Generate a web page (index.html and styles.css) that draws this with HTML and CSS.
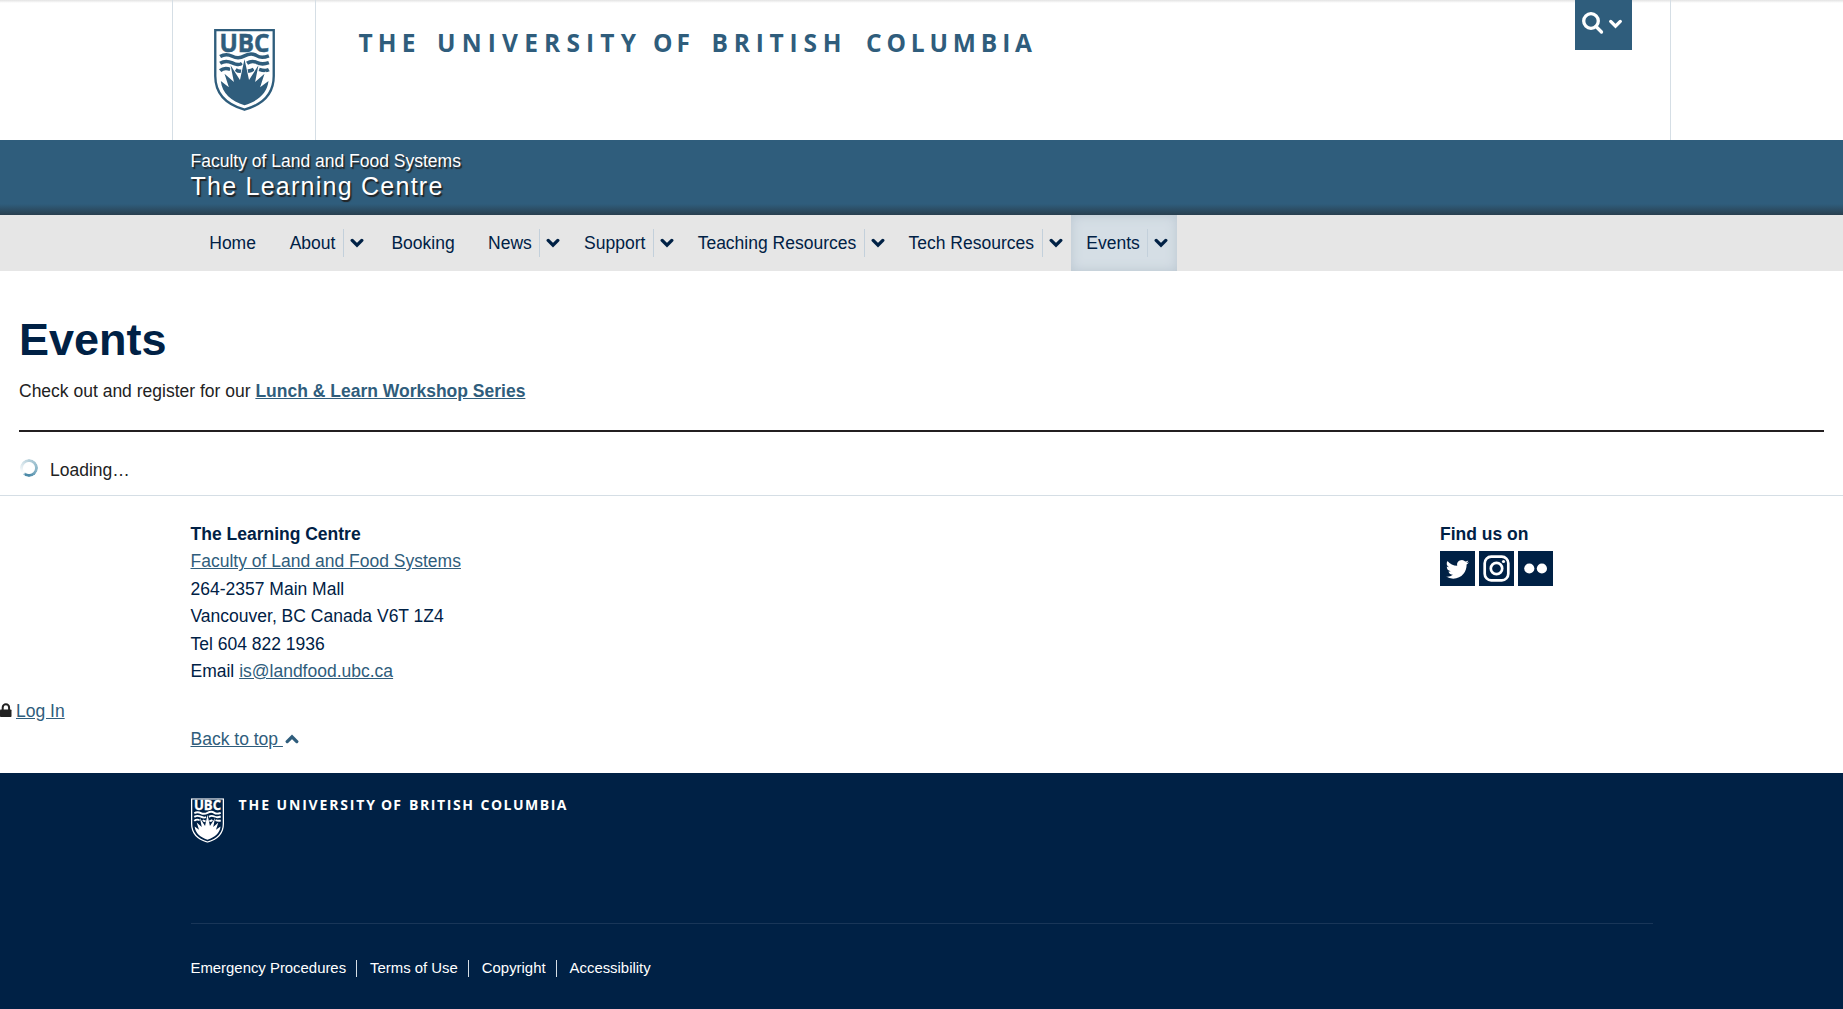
FILE: index.html
```html
<!DOCTYPE html>
<html lang="en">
<head>
<meta charset="utf-8">
<title>Events | The Learning Centre</title>
<link rel="stylesheet" href="styles.css">
</head>
<body>
<svg class="defs" width="0" height="0" aria-hidden="true">
  <symbol id="crest" viewBox="0 0 181 244">
    <path d="M3.500 3.500H177.500V140C177.500 190 148 224 90.500 240C33 224 3.500 190 3.500 140Z" fill="none" stroke="currentColor" stroke-width="7"/>
    <text class="crest-text" x="16" y="67" textLength="149" lengthAdjust="spacingAndGlyphs">UBC</text>
    <g fill="none" stroke="currentColor" stroke-width="10.500">
      <path d="M18 82C34 72 46 77 54 81S76 88 90.500 80S118 73 128 80S150 85 163 80"/>
      <path d="M18 102C34 92 46 97 54 101S76 108 83 102M98 102C108 95 118 95 128 100S150 105 163 100"/>
      <path d="M18 124C28 115 40 117 48 120M64 121C70 125 78 127 83 125M98 125C104 126 112 124 118 120M134 120C142 123 154 126 163 121"/>
    </g>
    <path class="crest-sun" d="M20 155L44 173L31 133L59 158L49 108L77 152L90.500 90L104 152L132 108L122 158L150 133L137 173L162 155C158 192 130 215 90.500 227C51 215 24 192 20 155Z"/>
  </symbol>
  <symbol id="chevron" viewBox="0 0 14 10">
    <path d="M2.200 2.400L7 7.200L11.800 2.400" fill="none" stroke="currentColor" stroke-width="3.300" stroke-linecap="round"/>
  </symbol>
</svg>

<header class="masthead">
  <div class="masthead-inner">
    <a class="crest-box"><svg class="crest" viewBox="0 0 181 244"><use href="#crest"/></svg></a>
    <svg class="wordmark" width="700" height="44" viewBox="0 0 700 44">
      <text y="31.500"><tspan x="-0.500" textLength="57">THE</tspan> <tspan x="78" textLength="199">UNIVERSITY</tspan> <tspan x="294" textLength="37">OF</tspan> <tspan x="352.500" textLength="130">BRITISH</tspan> <tspan x="507" textLength="166">COLUMBIA</tspan></text>
    </svg>
    <button class="search" aria-label="Search">
      <svg width="22" height="23" viewBox="0 0 22 23"><circle cx="9" cy="9" r="7.300"/><path d="M14 14.500L19.500 20"/></svg>
      <svg class="search-chevron" width="15" height="10"><use href="#chevron"/></svg>
    </button>
  </div>
</header>

<div class="unit">
  <div class="container">
    <a class="unit-faculty">Faculty of Land and Food Systems</a>
    <a class="unit-name">The Learning Centre</a>
  </div>
</div>

<nav class="menu">
  <div class="container menu-row">
    <a class="item plain home">Home</a>
    <div class="item"><a>About</a><span class="toggle"><svg><use href="#chevron"/></svg></span></div>
    <a class="item plain">Booking</a>
    <div class="item"><a>News</a><span class="toggle"><svg><use href="#chevron"/></svg></span></div>
    <div class="item"><a>Support</a><span class="toggle"><svg><use href="#chevron"/></svg></span></div>
    <div class="item"><a>Teaching Resources</a><span class="toggle"><svg><use href="#chevron"/></svg></span></div>
    <div class="item"><a>Tech Resources</a><span class="toggle"><svg><use href="#chevron"/></svg></span></div>
    <div class="item active"><a>Events</a><span class="toggle"><svg><use href="#chevron"/></svg></span></div>
  </div>
</nav>

<main class="content">
  <h1>Events</h1>
  <p>Check out and register for our <a class="link strong">Lunch &amp; Learn Workshop Series</a></p>
  <hr>
  <div class="loading"><span class="spinner"></span>Loading…</div>
</main>

<footer>
  <div class="unit-footer">
    <div class="container unit-footer-row">
      <address>
        <strong>The Learning Centre</strong><br>
        <a class="link">Faculty of Land and Food Systems</a><br>
        264-2357 Main Mall<br>
        Vancouver, BC Canada V6T 1Z4<br>
        Tel 604 822 1936<br>
        Email <a class="link">is@landfood.ubc.ca</a>
      </address>
      <div class="find">
        <strong>Find us on</strong>
        <div class="social">
          <a><svg viewBox="0 0 35 35"><path fill="#fff" d="M29 11.200a9.500 9.500 0 0 1-2.700.8 4.700 4.700 0 0 0 2-2.600 9.500 9.500 0 0 1-3 1.100 4.750 4.750 0 0 0-8.100 4.300 13.400 13.400 0 0 1-9.700-4.900 4.750 4.750 0 0 0 1.500 6.300 4.700 4.700 0 0 1-2.200-.6 4.750 4.750 0 0 0 3.800 4.700 4.700 4.700 0 0 1-2.100.1 4.750 4.750 0 0 0 4.400 3.300A9.500 9.500 0 0 1 6 25.600a13.400 13.400 0 0 0 7.200 2.100c8.800 0 13.700-7.400 13.400-14.100A9.600 9.600 0 0 0 29 11.200Z"/></svg></a>
          <a><svg viewBox="0 0 35 35" fill="none" stroke="#fff"><rect x="5.700" y="5.700" width="23.600" height="23.600" rx="6.500" stroke-width="2.700"/><circle cx="17.500" cy="17.500" r="5.700" stroke-width="2.700"/><circle cx="24.500" cy="10.500" r="1.600" fill="#fff" stroke="none"/></svg></a>
          <a><svg viewBox="0 0 35 35" fill="#fff"><circle cx="11.300" cy="17.500" r="5.100"/><circle cx="23.900" cy="17.500" r="5.100"/></svg></a>
        </div>
      </div>
    </div>
    <div class="login"><svg width="12" height="15" viewBox="0 0 12 15"><path d="M2.700 7V4.500a3.200 3.200 0 0 1 6.400 0V7" fill="none" stroke="#222" stroke-width="2"/><rect x="0" y="6.500" width="11.500" height="7.500" rx=".8" fill="#222"/></svg><a class="link">Log In</a></div>
    <div class="container top"><a class="link">Back to top&nbsp;</a><svg class="up"><use href="#chevron"/></svg></div>
  </div>
  <div class="global-footer">
    <div class="container">
      <div class="signature">
        <svg class="crest" viewBox="0 0 181 244"><use href="#crest"/></svg>
        <svg class="wordmark" width="340" height="26" viewBox="0 0 340 26">
          <text y="18"><tspan x="0.500" textLength="30.500">THE</tspan> <tspan x="38.500" textLength="98.500">UNIVERSITY</tspan> <tspan x="143" textLength="20">OF</tspan> <tspan x="171" textLength="64">BRITISH</tspan> <tspan x="242.500" textLength="86">COLUMBIA</tspan></text>
        </svg>
      </div>
      <div class="legal"><a>Emergency Procedures</a><i></i><a>Terms of Use</a><i></i><a>Copyright</a><i></i><a>Accessibility</a></div>
    </div>
  </div>
</footer>
</body>
</html>
```
FILE: styles.css
```css
* { box-sizing: border-box; }
body {
  margin: 0;
  background: #fff;
  color: #222;
  font: 17.5px/27.5px Arial, "Liberation Sans", sans-serif;
}
svg { display: block; flex: none; }
.defs { display: none; }
.container { width: 1463px; margin: 0 auto; padding-left: 0.5px; }
.link { color: #2f5d7c; text-decoration: underline; }
.strong { font-weight: bold; }

.masthead { height: 140px; background: linear-gradient(#e3e3e3, #fff 3px); }
.masthead-inner {
  display: flex;
  width: 1499px;
  height: 140px;
  margin: 0 auto;
  border: solid #d5dee5;
  border-width: 0 1px;
}
.crest-box {
  width: 143px;
  padding: 29px 0 0 41px;
  border-right: 1px solid #d5dee5;
  color: #2f5d7c;
}
.crest { width: 61px; height: 82px; }
.crest-text { font: bold 73px "Open Sans", sans-serif; fill: currentColor; stroke: currentColor; stroke-width: 1.500; }
.crest-sun { fill: currentColor; stroke: var(--ground, #fff); stroke-width: 5; paint-order: stroke; }
.wordmark { overflow: visible; }
.masthead .wordmark { margin: 20px 0 0 43px; color: #2f5d7c; font: bold 24.5px "Open Sans", sans-serif; }
.wordmark text { fill: currentColor; }
.search {
  display: flex;
  width: 57px;
  height: 50px;
  margin: 0 38px 0 auto;
  padding: 12px 0 0 7px;
  border: 0;
  background: #2f5d7c;
  color: #fff;
  gap: 4px;
}
.search circle, .search path { fill: none; stroke: #fff; stroke-width: 3.300; stroke-linecap: round; }
.search-chevron { margin-top: 7px; }

.unit {
  height: 75px;
  padding-top: 9px;
  background: linear-gradient(transparent 64px, rgba(34, 34, 34, .5)) #2f5d7c;
  color: #fff;
}
.unit a { display: block; text-shadow: 1.5px 1.5px 1px #222; }
.unit-faculty { line-height: 25px; }
.unit-name { font-size: 25px; line-height: 24px; letter-spacing: 1.250px; }

.menu { height: 56px; background: #e6e6e6; color: #002145; }
.menu-row { display: flex; }
.item { display: flex; align-items: center; height: 56px; padding-left: 15px; white-space: nowrap; }
.item > a, .plain { padding-top: 1px; }
.plain { padding-right: 18.400px; padding-left: 18.700px; }
.home { padding-right: 18.750px; padding-left: 18.750px; }
.toggle {
  display: flex;
  width: 29.600px;
  height: 28px;
  margin-left: 7.700px;
  padding: 9px 0 0 6px;
  border-left: 1px solid #c3d0db;
}
.toggle svg, .up { width: 14px; height: 10px; }
.active { background: #d5dee5; box-shadow: inset 0 0 12px #bac6d0; }

.content { height: 224px; padding: 41px 19px 0; }
h1 { margin: 0; color: #002145; font-size: 45px; line-height: 56px; }
p { margin: 10px 0 24px; }
hr { height: 2px; margin: 0 0 25px; border: 0; background: #231f20; }
.loading { display: flex; align-items: center; }
.spinner {
  width: 18px;
  height: 18px;
  margin: -4px 12px 0 1px;
  border-radius: 50%;
  background: conic-gradient(#b5cfda, #88b4c7 30%, #4c8aa8 50%, #4c8aa8 58%, #fff 63%, #f4f8fa 70%, #b5cfda);
  mask: radial-gradient(circle, transparent 5.500px, #000 6.500px);
}

.unit-footer { height: 278px; padding-top: 24.500px; border-top: 1px solid #d5dee5; color: #002145; }
.unit-footer-row { display: flex; justify-content: space-between; }
address { font-style: normal; }
.find { width: 213px; }
.social { display: flex; gap: 4px; margin-top: 2.500px; }
.social a { width: 35px; height: 35px; background: #002145; }
.login { display: flex; height: 27.500px; gap: 4px; margin-top: 12.500px; }
.login svg { margin-top: 5px; }
.top { display: flex; align-items: center; gap: 2px; }
.top a { white-space: pre; }
.up { transform: rotate(180deg); color: #2f5d7c; }

.global-footer { --ground: #002145; height: 236px; background: #002145; color: #fff; }
.signature { display: flex; height: 151px; padding: 25px 0 0 0.500px; border-bottom: 1px solid #193658; }
.signature .crest { width: 33px; height: 45px; }
.signature .wordmark { margin: -6px 0 0 13.500px; font: bold 14px "Open Sans", sans-serif; }
.legal { display: flex; align-items: center; height: 89px; font-size: 14.900px; }
.legal i { width: 1px; height: 17px; margin: 0 13px 0 10px; background: #d5dee5; }
```
